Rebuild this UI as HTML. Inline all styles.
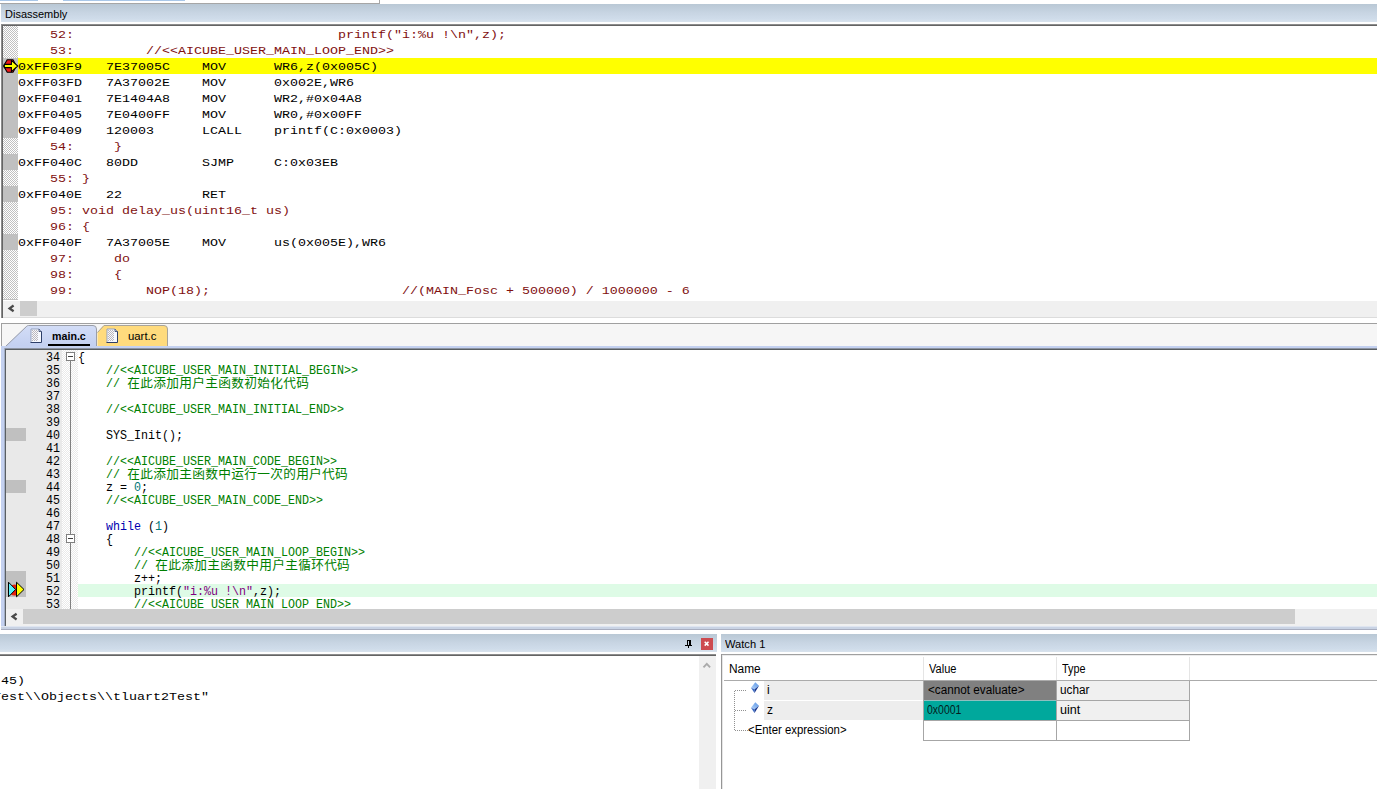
<!DOCTYPE html>
<html><head><meta charset="utf-8"><title>uVision</title><style>
html,body{margin:0;padding:0;background:#fff;}
body{width:1377px;height:789px;position:relative;overflow:hidden;font-family:"Liberation Sans",sans-serif;}
div,span,pre,svg{position:absolute;box-sizing:border-box;margin:0;padding:0;}
.ui{font-family:"Liberation Sans",sans-serif;font-size:12px;line-height:14px;color:#000;white-space:pre;transform-origin:0 0;}
.cn{font-family:"Liberation Mono",monospace;font-size:13.33px;line-height:16px;white-space:pre;color:#000;height:16px;transform:scaleY(0.87);transform-origin:0 12px;}
.src{color:#7f1010;}
.ed{font-family:"Liberation Mono",monospace;font-size:13.33px;transform:scaleX(0.875);transform-origin:0 0;line-height:13px;white-space:pre;color:#000;height:13px;}
.ed i{font-style:normal;position:static;}
.g{color:#008000}.k{color:#0000b0}.n{color:#007878}.s{color:#800080}
.tb{background:linear-gradient(#bccad7,#c9d6e4 50%,#d6e1ee);}
.chk{background:conic-gradient(#c0c0c0 25%,#fff 0 50%,#c0c0c0 0 75%,#fff 0) 0 0/2px 2px;}
.chk2{background:conic-gradient(#e9e9e9 25%,#fff 0 50%,#e9e9e9 0 75%,#fff 0) 0 0/2px 2px;}
</style></head><body>
<div style="left:0px;top:0px;width:38px;height:1px;background:#a9c7e8;"></div>
<div style="left:63px;top:0px;width:122px;height:1px;background:#a9c7e8;"></div>
<div style="left:0px;top:3px;width:380px;height:1px;background:#a6a6a6;"></div>
<div style="left:379px;top:0px;width:1px;height:4px;background:#a6a6a6;"></div>
<div style="left:1px;top:4px;width:1376px;height:18px;background:;background:linear-gradient(#b9c8d5,#c8d5e3 50%,#cfdcea 82%,#d9e3ed);"></div>
<span class="ui" id="t_dis" style="left:5px;top:7px;font-size:11px;transform:scaleX(1.0);">Disassembly</span>
<div style="left:1px;top:24px;width:1376px;height:1px;background:#8c8c8c;"></div>
<div style="left:1px;top:25px;width:1376px;height:1px;background:#646464;"></div>
<div style="left:1px;top:24px;width:1px;height:294px;background:#8c8c8c;"></div>
<div style="left:2px;top:25px;width:1px;height:293px;background:#646464;"></div>
<div class="chk" style="left:3px;top:26px;width:15px;height:274px;background:;"></div>
<div style="left:18px;top:58px;width:1359px;height:16px;background:#ffff00;"></div>
<pre class="cn src" style="left:18px;top:27px;">    52:                                 printf(&quot;i:%u !\n&quot;,z); </pre>
<pre class="cn src" style="left:18px;top:43px;">    53:         //&lt;&lt;AICUBE_USER_MAIN_LOOP_END&gt;&gt; </pre>
<div style="left:3px;top:58px;width:15px;height:16px;background:#c0c0c0;"></div>
<pre class="cn" style="left:18px;top:59px;">0xFF03F9   7E37005C    MOV      WR6,z(0x005C)</pre>
<div style="left:3px;top:74px;width:15px;height:16px;background:#c0c0c0;"></div>
<pre class="cn" style="left:18px;top:75px;">0xFF03FD   7A37002E    MOV      0x002E,WR6</pre>
<div style="left:3px;top:90px;width:15px;height:16px;background:#c0c0c0;"></div>
<pre class="cn" style="left:18px;top:91px;">0xFF0401   7E1404A8    MOV      WR2,#0x04A8</pre>
<div style="left:3px;top:106px;width:15px;height:16px;background:#c0c0c0;"></div>
<pre class="cn" style="left:18px;top:107px;">0xFF0405   7E0400FF    MOV      WR0,#0x00FF</pre>
<div style="left:3px;top:122px;width:15px;height:16px;background:#c0c0c0;"></div>
<pre class="cn" style="left:18px;top:123px;">0xFF0409   120003      LCALL    printf(C:0x0003)</pre>
<pre class="cn src" style="left:18px;top:139px;">    54:     } </pre>
<div style="left:3px;top:154px;width:15px;height:16px;background:#c0c0c0;"></div>
<pre class="cn" style="left:18px;top:155px;">0xFF040C   80DD        SJMP     C:0x03EB</pre>
<pre class="cn src" style="left:18px;top:171px;">    55: } </pre>
<div style="left:3px;top:186px;width:15px;height:16px;background:#c0c0c0;"></div>
<pre class="cn" style="left:18px;top:187px;">0xFF040E   22          RET      </pre>
<pre class="cn src" style="left:18px;top:203px;">    95: void delay_us(uint16_t us) </pre>
<pre class="cn src" style="left:18px;top:219px;">    96: { </pre>
<div style="left:3px;top:234px;width:15px;height:16px;background:#c0c0c0;"></div>
<pre class="cn" style="left:18px;top:235px;">0xFF040F   7A37005E    MOV      us(0x005E),WR6</pre>
<pre class="cn src" style="left:18px;top:251px;">    97:     do </pre>
<pre class="cn src" style="left:18px;top:267px;">    98:     { </pre>
<pre class="cn src" style="left:18px;top:283px;">    99:         NOP(18);                        //(MAIN_Fosc + 500000) / 1000000 - 6 </pre>
<div style="left:3px;top:299px;width:15px;height:1px;background:#c0c0c0;"></div>
<svg style="left:3px;top:59px;" width="16" height="14" viewBox="0 0 16 14">
<polygon points="0.6,7 4.2,0.8 10,0.8 13.5,7 10,13.2 4.2,13.2" fill="#f01818" stroke="#000" stroke-width="1.1"/>
<polygon points="1.3,5.4 8.4,5.4 8.4,1.4 14.8,7 8.4,12.6 8.4,8.6 1.3,8.6" fill="#ffff00" stroke="#000" stroke-width="1.1" stroke-linejoin="miter"/>
</svg>
<div style="left:3px;top:301px;width:1374px;height:16px;background:#f0f0f0;"></div>
<div style="left:3px;top:317px;width:1374px;height:1px;background:#dcdcdc;"></div>
<div style="left:20px;top:301px;width:17px;height:15px;background:#cdcdcd;"></div>
<svg style="left:7px;top:304px;" width="8" height="9" viewBox="0 0 8 9"><polyline points="6.6,1.5 2.6,4.4 6.6,7.3" fill="none" stroke="#4a4a4a" stroke-width="2.3" stroke-linejoin="miter"/></svg>
<div style="left:1px;top:323px;width:1376px;height:1px;background:#a0a0a0;"></div>
<div style="left:1px;top:323px;width:1px;height:24px;background:#a0a0a0;"></div>
<div style="left:2px;top:324px;width:1375px;height:22px;background:#f6f6f6;"></div>
<svg style="left:0;top:323px;" width="200" height="25" viewBox="0 0 200 25">
<defs><linearGradient id="gm" x1="0" y1="0" x2="0" y2="1"><stop offset="0" stop-color="#d3ddf7"/><stop offset="1" stop-color="#c2cff0"/></linearGradient></defs>
<path d="M4,24.5 L26.5,3 Q27,2.5 28,2.5 L93,2.5 Q96,2.5 96,5.5 L96,24.5 Z" fill="url(#gm)"/>
<path d="M5.5,23.5 L26.8,3.2 Q27.5,2.5 28.5,2.5 L93,2.5 Q96.5,2.5 96.5,6 L96.5,23.5" stroke="#9a9ea8" stroke-width="1" fill="none"/>
<path d="M97.5,23.5 L97.5,9 L103.5,2.5 L164,2.5 Q167.5,2.5 167.5,6 L167.5,23.5 Z" fill="#ffdb7d"/>
<path d="M97.5,9.5 L104,2.5 L164,2.5 Q167.5,2.5 167.5,6 L167.5,23.5" stroke="#a8a49a" stroke-width="1" fill="none"/>
</svg>
<svg width="0" height="0" style="left:0;top:0"><defs><pattern id="hp" width="2" height="2" patternUnits="userSpaceOnUse"><rect width="1" height="1" fill="#bcb8bc"/><rect x="1" y="1" width="1" height="1" fill="#bcb8bc"/></pattern></defs></svg>
<svg style="left:30px;top:328px;" width="13" height="16" viewBox="0 0 13 16">
<path d="M1,1 L9,1 L11.5,3.5 L11.5,14.5 L1,14.5 Z" fill="#f6f8fe"/>
<rect x="2" y="2" width="6" height="11" fill="url(#hp)" shape-rendering="crispEdges"/>
<path d="M1,14.5 L1,1 L9,1" fill="none" stroke="#94a0bc" stroke-width="1"/>
<path d="M9,1 L11.5,3.5 L11.5,14.5 L0.5,14.5" fill="none" stroke="#2c3e68" stroke-width="1"/>
<path d="M9,1 L9,3.5 L11.5,3.5" fill="#dfe6f6" stroke="#2c3e68" stroke-width="0.8"/>
</svg>
<svg style="left:106px;top:328px;" width="13" height="16" viewBox="0 0 13 16">
<path d="M1,1 L9,1 L11.5,3.5 L11.5,14.5 L1,14.5 Z" fill="#f6f8fe"/>
<rect x="2" y="2" width="6" height="11" fill="url(#hp)" shape-rendering="crispEdges"/>
<path d="M1,14.5 L1,1 L9,1" fill="none" stroke="#94a0bc" stroke-width="1"/>
<path d="M9,1 L11.5,3.5 L11.5,14.5 L0.5,14.5" fill="none" stroke="#2c3e68" stroke-width="1"/>
<path d="M9,1 L9,3.5 L11.5,3.5" fill="#dfe6f6" stroke="#2c3e68" stroke-width="0.8"/>
</svg>
<span class="ui" id="t_main" style="left:52px;top:329px;font-size:11px;transform:scaleX(0.97);font-weight:bold;">main.c</span>
<div style="left:48px;top:344px;width:42px;height:2px;background:#000;"></div>
<span class="ui" id="t_uart" style="left:128px;top:329px;font-size:11px;transform:scaleX(1.03);">uart.c</span>
<div style="left:1px;top:346px;width:1376px;height:2px;background:#c4d1f0;"></div>
<div style="left:1px;top:346px;width:3px;height:284px;background:#c4d1f0;"></div>
<div style="left:4px;top:348px;width:1373px;height:1px;background:#8d94a2;"></div>
<div style="left:4px;top:349px;width:1373px;height:1px;background:#5a5f62;"></div>
<div style="left:4px;top:348px;width:1px;height:281px;background:#a3aec6;"></div>
<div style="left:5px;top:349px;width:1px;height:280px;background:#5a5f62;"></div>
<div style="left:6px;top:350px;width:56px;height:259px;background:#e9e9e9;"></div>
<div class="chk2" style="left:62px;top:350px;width:16px;height:259px;background:;"></div>
<div style="left:70px;top:361px;width:1px;height:248px;background:#808080;"></div>
<div style="left:6px;top:428px;width:20px;height:13px;background:#c0c0c0;"></div>
<div style="left:6px;top:480px;width:20px;height:13px;background:#c0c0c0;"></div>
<div style="left:6px;top:571px;width:20px;height:26px;background:#c0c0c0;"></div>
<div style="left:78px;top:584px;width:1299px;height:13px;background:#defbe6;"></div>
<svg style="left:66px;top:352px;" width="9" height="9" viewBox="0 0 9 9"><rect x="0.5" y="0.5" width="8" height="8" fill="#fff" stroke="#808080"/><line x1="2" y1="4.5" x2="7" y2="4.5" stroke="#404040"/></svg>
<svg style="left:66px;top:534px;" width="9" height="9" viewBox="0 0 9 9"><rect x="0.5" y="0.5" width="8" height="8" fill="#fff" stroke="#808080"/><line x1="2" y1="4.5" x2="7" y2="4.5" stroke="#404040"/></svg>
<div style="left:6px;top:350px;width:1371px;height:259px;overflow:hidden;">
<pre class="ed" style="left:40px;top:1px;">34</pre>
<pre class="ed" style="left:72px;top:1px;">{</pre>
<pre class="ed" style="left:40px;top:14px;">35</pre>
<pre class="ed" style="left:72px;top:14px;">    <i class="g">//&lt;&lt;AICUBE_USER_MAIN_INITIAL_BEGIN&gt;&gt;</i></pre>
<pre class="ed" style="left:40px;top:27px;">36</pre>
<pre class="ed" style="left:72px;top:27px;">    <i class="g">// </i></pre>
<svg style="left:121px;top:27px;" width="184" height="14" fill="#008000"><text x="0.3" y="10.2" font-size="12.7" letter-spacing="0.3" fill="#008000" font-family="&quot;Liberation Sans&quot;, &quot;Noto Sans CJK SC&quot;, sans-serif">在此添加用户主函数初始化代码</text></svg>
<pre class="ed" style="left:40px;top:40px;">37</pre>
<pre class="ed" style="left:40px;top:53px;">38</pre>
<pre class="ed" style="left:72px;top:53px;">    <i class="g">//&lt;&lt;AICUBE_USER_MAIN_INITIAL_END&gt;&gt;</i></pre>
<pre class="ed" style="left:40px;top:66px;">39</pre>
<pre class="ed" style="left:40px;top:79px;">40</pre>
<pre class="ed" style="left:72px;top:79px;">    SYS_Init();</pre>
<pre class="ed" style="left:40px;top:92px;">41</pre>
<pre class="ed" style="left:40px;top:105px;">42</pre>
<pre class="ed" style="left:72px;top:105px;">    <i class="g">//&lt;&lt;AICUBE_USER_MAIN_CODE_BEGIN&gt;&gt;</i></pre>
<pre class="ed" style="left:40px;top:118px;">43</pre>
<pre class="ed" style="left:72px;top:118px;">    <i class="g">// </i></pre>
<svg style="left:121px;top:118px;" width="223" height="14" fill="#008000"><text x="0.3" y="10.2" font-size="12.7" letter-spacing="0.3" fill="#008000" font-family="&quot;Liberation Sans&quot;, &quot;Noto Sans CJK SC&quot;, sans-serif">在此添加主函数中运行一次的用户代码</text></svg>
<pre class="ed" style="left:40px;top:131px;">44</pre>
<pre class="ed" style="left:72px;top:131px;">    z = <i class="n">0</i>;</pre>
<pre class="ed" style="left:40px;top:144px;">45</pre>
<pre class="ed" style="left:72px;top:144px;">    <i class="g">//&lt;&lt;AICUBE_USER_MAIN_CODE_END&gt;&gt;</i></pre>
<pre class="ed" style="left:40px;top:157px;">46</pre>
<pre class="ed" style="left:40px;top:170px;">47</pre>
<pre class="ed" style="left:72px;top:170px;">    <i class="k">while</i> (<i class="n">1</i>)</pre>
<pre class="ed" style="left:40px;top:183px;">48</pre>
<pre class="ed" style="left:72px;top:183px;">    {</pre>
<pre class="ed" style="left:40px;top:196px;">49</pre>
<pre class="ed" style="left:72px;top:196px;">        <i class="g">//&lt;&lt;AICUBE_USER_MAIN_LOOP_BEGIN&gt;&gt;</i></pre>
<pre class="ed" style="left:40px;top:209px;">50</pre>
<pre class="ed" style="left:72px;top:209px;">        <i class="g">// </i></pre>
<svg style="left:149px;top:209px;" width="197" height="14" fill="#008000"><text x="0.3" y="10.2" font-size="12.7" letter-spacing="0.3" fill="#008000" font-family="&quot;Liberation Sans&quot;, &quot;Noto Sans CJK SC&quot;, sans-serif">在此添加主函数中用户主循环代码</text></svg>
<pre class="ed" style="left:40px;top:222px;">51</pre>
<pre class="ed" style="left:72px;top:222px;">        z++;</pre>
<pre class="ed" style="left:40px;top:235px;">52</pre>
<pre class="ed" style="left:72px;top:235px;">        printf(<i class="s">"i:%u !\n"</i>,z);</pre>
<pre class="ed" style="left:40px;top:248px;">53</pre>
<pre class="ed" style="left:72px;top:248px;">        <i class="g">//&lt;&lt;AICUBE_USER_MAIN_LOOP_END&gt;&gt;</i></pre>
</div>
<svg style="left:7px;top:581px;" width="19" height="17" viewBox="0 0 19 17">
<circle cx="7.5" cy="9" r="5.6" fill="#e8200c"/>
<polygon points="1.5,1.2 1.5,15.8 8.6,8.5" fill="#58f0f8" stroke="#000" stroke-width="1"/>
<polygon points="9.5,1.2 9.5,15.8 17,8.5" fill="#ffff00" stroke="#000" stroke-width="1"/>
</svg>
<div style="left:6px;top:609px;width:1371px;height:17px;background:#f0f0f0;"></div>
<div style="left:23px;top:609px;width:1272px;height:15px;background:#cdcdcd;"></div>
<svg style="left:10px;top:612px;" width="8" height="9" viewBox="0 0 8 9"><polyline points="6.6,1.7 2.6,4.6 6.6,7.5" fill="none" stroke="#4a4a4a" stroke-width="2.3" stroke-linejoin="miter"/></svg>
<div style="left:1px;top:626px;width:1376px;height:1px;background:#dfe5f0;"></div>
<div style="left:1px;top:627px;width:1376px;height:2px;background:#c9d3e4;"></div>
<div style="left:1px;top:629px;width:1376px;height:1px;background:#a9aec0;"></div>
<div style="left:0px;top:634px;width:717px;height:18px;background:;background:linear-gradient(#b9c8d5,#c8d5e3 50%,#cfdcea 82%,#d9e3ed);"></div>
<div style="left:0px;top:654px;width:716px;height:1px;background:#8c8c8c;"></div>
<div style="left:0px;top:655px;width:716px;height:1px;background:#646464;"></div>
<div style="left:699px;top:656px;width:17px;height:133px;background:#f0f0f0;"></div>
<svg style="left:702px;top:661px;" width="10" height="8" viewBox="0 0 10 8"><polyline points="1.5,6.3 4.8,2.8 8.1,6.3" fill="none" stroke="#aaaaaa" stroke-width="1.9"/></svg>
<svg style="left:685px;top:640px;" width="8" height="9" viewBox="0 0 8 9" shape-rendering="crispEdges">
<rect x="2" y="0" width="4" height="1" fill="#000"/>
<rect x="2" y="0" width="1" height="5" fill="#000"/>
<rect x="4" y="0" width="2" height="5" fill="#000"/>
<rect x="0" y="5" width="7" height="1" fill="#000"/>
<rect x="3" y="6" width="1" height="2" fill="#000"/>
</svg>
<div style="left:701px;top:638px;width:12px;height:12px;background:#cd4b50;"></div>
<svg style="left:701px;top:638px;" width="12" height="12" viewBox="0 0 12 12"><path d="M3.7,3.8 L7.5,7.6 M7.5,3.8 L3.7,7.6" stroke="#fff" stroke-width="1.5"/></svg>
<div style="left:0;top:656px;width:699px;height:133px;overflow:hidden;">
<pre class="cn" style="left:-7px;top:17px;"> 45)</pre>
<pre class="cn" style="left:-7px;top:33px;">Test\\Objects\\tluart2Test"</pre>
</div>
<div style="left:721px;top:634px;width:656px;height:18px;background:;background:linear-gradient(#b9c8d5,#c8d5e3 50%,#cfdcea 82%,#d9e3ed);"></div>
<span class="ui" id="t_watch" style="left:725px;top:637px;font-size:11.5px;transform:scaleX(0.967);">Watch 1</span>
<div style="left:721px;top:654px;width:656px;height:1px;background:#a0a0a0;"></div>
<div style="left:721px;top:655px;width:656px;height:1px;background:#ececec;"></div>
<div style="left:721px;top:654px;width:1px;height:135px;background:#969696;"></div>
<div style="left:722px;top:655px;width:1px;height:134px;background:#e6e6e6;"></div>
<div style="left:724px;top:680px;width:653px;height:1px;background:#ababab;"></div>
<div style="left:923px;top:657px;width:1px;height:23px;background:#e5e5e5;"></div>
<div style="left:1056px;top:657px;width:1px;height:23px;background:#e5e5e5;"></div>
<div style="left:1189px;top:657px;width:1px;height:23px;background:#e5e5e5;"></div>
<span class="ui" id="t_name" style="left:729px;top:662px;font-size:12px;transform:scaleX(0.99);">Name</span>
<span class="ui" id="t_value" style="left:929px;top:662px;font-size:12px;transform:scaleX(0.92);">Value</span>
<span class="ui" id="t_type" style="left:1062px;top:662px;font-size:12px;transform:scaleX(0.9);">Type</span>
<div style="left:764px;top:681px;width:159px;height:19px;background:#ededed;"></div>
<div style="left:764px;top:701px;width:159px;height:19px;background:#ededed;"></div>
<div style="left:924px;top:681px;width:132px;height:19px;background:#808080;"></div>
<div style="left:924px;top:701px;width:132px;height:19px;background:#00a89c;"></div>
<div style="left:1057px;top:681px;width:132px;height:19px;background:#f0f0f0;"></div>
<div style="left:1057px;top:701px;width:132px;height:19px;background:#f0f0f0;"></div>
<div style="left:923px;top:700px;width:267px;height:1px;background:#a6a6a6;"></div>
<div style="left:923px;top:720px;width:267px;height:1px;background:#a6a6a6;"></div>
<div style="left:923px;top:740px;width:267px;height:1px;background:#a6a6a6;"></div>
<div style="left:923px;top:681px;width:1px;height:60px;background:#a6a6a6;"></div>
<div style="left:1056px;top:681px;width:1px;height:60px;background:#a6a6a6;"></div>
<div style="left:1189px;top:681px;width:1px;height:60px;background:#a6a6a6;"></div>
<div style="left:924px;top:700px;width:132px;height:1px;background:#8fbfbf;"></div>
<span class="ui" id="t_i" style="left:767px;top:683px;font-size:12px;transform:scaleX(1.0);">i</span>
<span class="ui" id="t_z" style="left:767px;top:703px;font-size:12px;transform:scaleX(1.0);">z</span>
<span class="ui" id="t_enter" style="left:748px;top:723px;font-size:12px;transform:scaleX(0.947);">&lt;Enter expression&gt;</span>
<span class="ui" id="t_cannot" style="left:928px;top:683px;font-size:12px;transform:scaleX(0.977);">&lt;cannot evaluate&gt;</span>
<span class="ui" id="t_hex" style="left:927px;top:703px;font-size:12px;transform:scaleX(0.873);color:#051c1c;">0x0001</span>
<span class="ui" id="t_uchar" style="left:1060px;top:683px;font-size:12px;transform:scaleX(0.98);">uchar</span>
<span class="ui" id="t_uint" style="left:1060px;top:703px;font-size:12px;transform:scaleX(1.05);">uint</span>
<svg style="left:733px;top:688px;" width="16" height="46" viewBox="0 0 16 46" shape-rendering="crispEdges">
<path d="M1.5,2.5 L1.5,43 M1.5,2.5 L14,2.5 M1.5,22.5 L14,22.5 M1.5,42.5 L15,42.5" stroke="#909090" stroke-width="1" stroke-dasharray="1,1" fill="none"/></svg>
<svg style="left:750px;top:682px;" width="10" height="12" viewBox="0 0 10 12">
<defs><linearGradient id="dg682" x1="0" y1="1" x2="1" y2="0"><stop offset="0" stop-color="#b4d4fa"/><stop offset="1" stop-color="#5a94e4"/></linearGradient></defs>
<polygon points="5.3,0.2 9,3.8 4.6,7.3 1,5.8" fill="url(#dg682)"/>
<polygon points="1,5.8 4.6,7.3 4.5,11.1" fill="#3a6cc6"/>
<polygon points="4.6,7.3 9,3.8 4.5,11.1" fill="#15348c"/>
</svg>
<svg style="left:750px;top:702px;" width="10" height="12" viewBox="0 0 10 12">
<defs><linearGradient id="dg702" x1="0" y1="1" x2="1" y2="0"><stop offset="0" stop-color="#b4d4fa"/><stop offset="1" stop-color="#5a94e4"/></linearGradient></defs>
<polygon points="5.3,0.2 9,3.8 4.6,7.3 1,5.8" fill="url(#dg702)"/>
<polygon points="1,5.8 4.6,7.3 4.5,11.1" fill="#3a6cc6"/>
<polygon points="4.6,7.3 9,3.8 4.5,11.1" fill="#15348c"/>
</svg>
</body></html>
